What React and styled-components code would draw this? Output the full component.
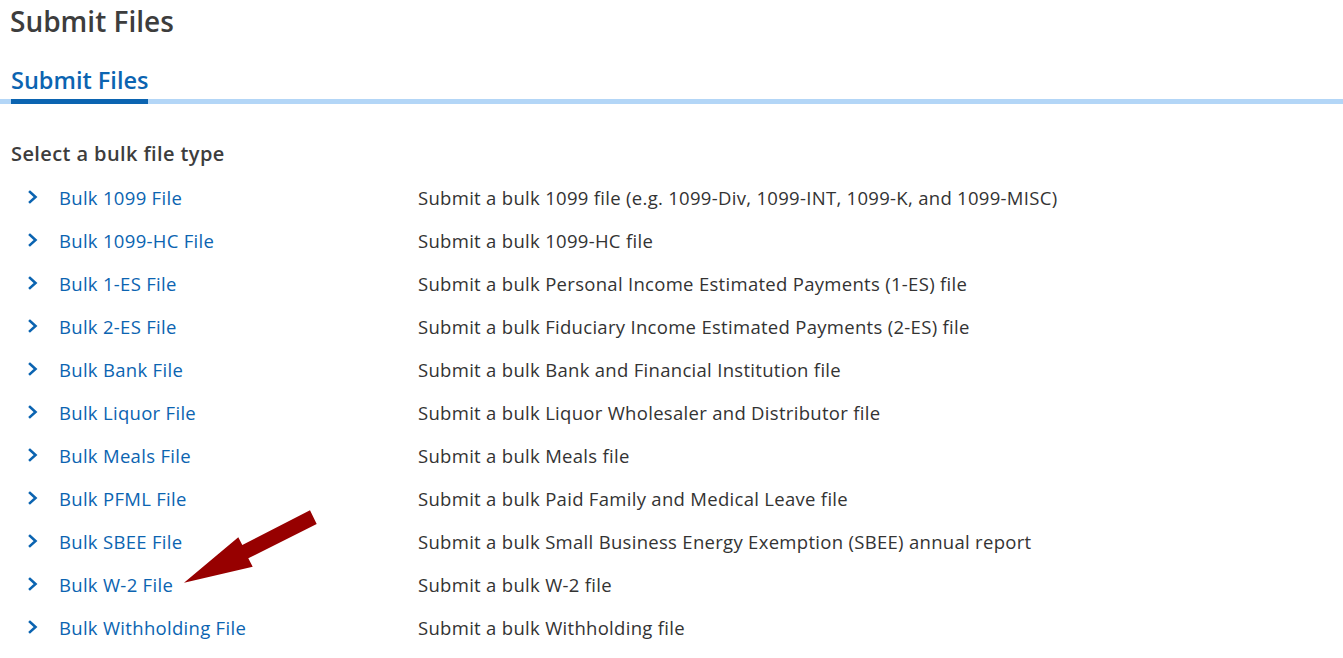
import React from "react";
import styled, { createGlobalStyle } from "styled-components";

const Global = createGlobalStyle`
  html, body { margin: 0; padding: 0; background: #fff; }
  body { font-family: "Open Sans", "Noto Sans", "Liberation Sans", sans-serif; color: #333; }
`;

const Page = styled.div`
  position: relative;
  width: 1343px;
  height: 658px;
  overflow: hidden;
`;

const Title = styled.h1`
  margin: 0;
  padding: 3px 0 0 10px;
  font-size: 28px;
  font-weight: 600;
  line-height: 36px;
  color: #3d3d3d;
`;

const TabBar = styled.div`
  margin-top: 26px;
  display: flex;
  align-items: flex-end;
  border-bottom: 5px solid #b3d6f7;
`;

const Tab = styled.div`
  margin-left: 11px;
  font-size: 23.5px;
  font-weight: 600;
  line-height: 30px;
  color: #0b64b1;
  padding-bottom: 4px;
  margin-bottom: -5px;
  border-bottom: 5px solid #0b64b1;
`;

const Section = styled.section`
  padding: 36px 0 0 11px;
`;

const Heading = styled.h2`
  margin: 0 0 8px;
  font-size: 20px;
  font-weight: 600;
  line-height: 28px;
  color: #3d3d3d;
  letter-spacing: 0.4px;
`;

const List = styled.ul`
  list-style: none;
  margin: 0;
  padding: 0;
`;

const Row = styled.li`
  display: grid;
  grid-template-columns: 48px 359px 1fr;
  align-items: center;
  height: 43px;
  font-size: 18.5px;
`;

const Chevron = styled.span`
  display: flex;
  align-items: center;
  padding-left: 17px;
  color: #0b64b1;
  margin-top: -2px;
`;

const Link = styled.a`
  color: #0b64b1;
  text-decoration: none;
  cursor: pointer;
  letter-spacing: 0.3px;
`;

const Desc = styled.span`
  color: #333;
  letter-spacing: 0.3px;
`;

const Arrow = styled.svg`
  position: absolute;
  left: 180px;
  top: 505px;
`;

const items = [
  ["Bulk 1099 File", "Submit a bulk 1099 file (e.g. 1099-Div, 1099-INT, 1099-K, and 1099-MISC)"],
  ["Bulk 1099-HC File", "Submit a bulk 1099-HC file"],
  ["Bulk 1-ES File", "Submit a bulk Personal Income Estimated Payments (1-ES) file"],
  ["Bulk 2-ES File", "Submit a bulk Fiduciary Income Estimated Payments (2-ES) file"],
  ["Bulk Bank File", "Submit a bulk Bank and Financial Institution file"],
  ["Bulk Liquor File", "Submit a bulk Liquor Wholesaler and Distributor file"],
  ["Bulk Meals File", "Submit a bulk Meals file"],
  ["Bulk PFML File", "Submit a bulk Paid Family and Medical Leave file"],
  ["Bulk SBEE File", "Submit a bulk Small Business Energy Exemption (SBEE) annual report"],
  ["Bulk W-2 File", "Submit a bulk W-2 file"],
  ["Bulk Withholding File", "Submit a bulk Withholding file"],
];

const ChevronIcon = () => (
  <svg width="10" height="14" viewBox="0 0 10 14">
    <path d="M2 2 L7.5 7 L2 12" fill="none" stroke="currentColor" strokeWidth="2.6" strokeLinecap="square" strokeLinejoin="miter" />
  </svg>
);

export default function App() {
  return (
    <Page>
      <Global />
      <Title>Submit Files</Title>
      <TabBar>
        <Tab>Submit Files</Tab>
      </TabBar>
      <Section>
        <Heading>Select a bulk file type</Heading>
        <List>
          {items.map(([name, desc]) => (
            <Row key={name}>
              <Chevron><ChevronIcon /></Chevron>
              <Link>{name}</Link>
              <Desc>{desc}</Desc>
            </Row>
          ))}
        </List>
      </Section>
      <Arrow width="145" height="85" viewBox="180 505 145 85">
        <polygon
          points="184,582.7 238.3,537.3 242.3,545 310,510.3 316.7,524 248.3,558.3 252.7,566.7"
          fill="#970000"
        />
      </Arrow>
    </Page>
  );
}
